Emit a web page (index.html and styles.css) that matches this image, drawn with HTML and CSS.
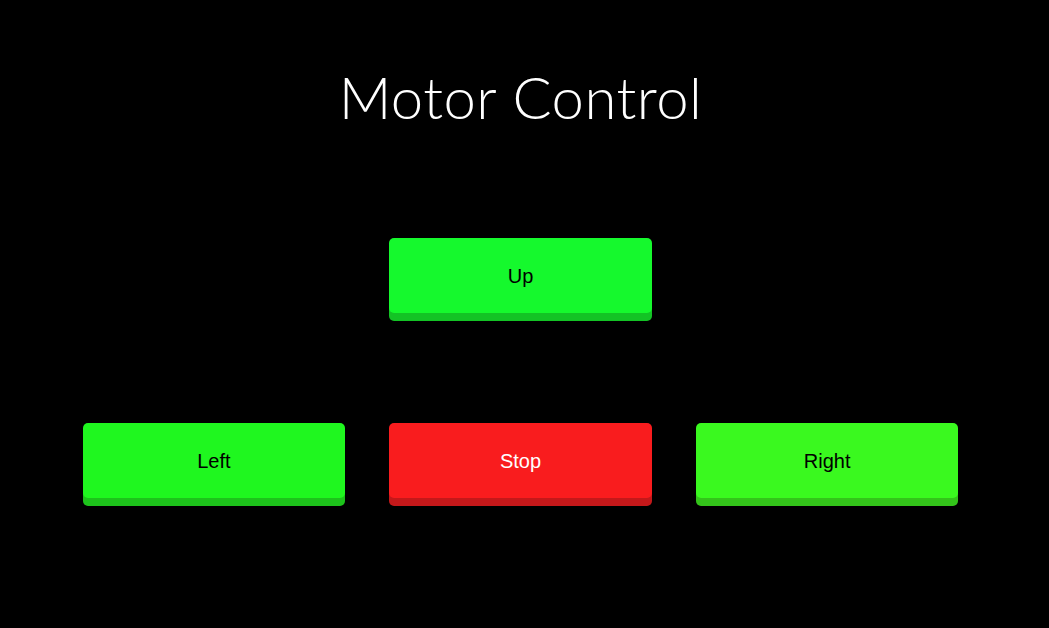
FILE: index.html
```html
<!DOCTYPE html>
<html>
<head>
<meta charset="utf-8">
<link rel="stylesheet" href="styles.css">
</head>
<body>
<div class="page">
  <h1 class="title">Motor Control</h1>
  <div class="pad">
    <div class="row row-top">
      <button class="btn btn-up">Up</button>
    </div>
    <div class="row row-bottom">
      <button class="btn btn-left">Left</button>
      <button class="btn btn-stop">Stop</button>
      <button class="btn btn-right">Right</button>
    </div>
  </div>
</div>
</body>
</html>
```
FILE: styles.css
```css
html, body {
  margin: 0;
  padding: 0;
  background: #000;
}
.page {
  width: 1041px;
  height: 628px;
  display: flex;
  flex-direction: column;
  align-items: center;
}
.title {
  margin: 62px 0 0;
  font-family: "Lato", "Noto Sans", sans-serif;
  font-weight: 300;
  font-size: 58px;
  letter-spacing: 0.5px;
  line-height: 70px;
  color: #fff;
}
.pad {
  width: 876px;
  display: flex;
  flex-direction: column;
  margin-top: 106px;
}
.row {
  display: grid;
  grid-template-columns: repeat(3, 1fr);
  column-gap: 44px;
}
.row-top .btn-up {
  grid-column: 2;
}
.row-bottom {
  margin-top: 110px;
}
.btn {
  height: 75px;
  border: none;
  border-radius: 5px;
  font-family: "Liberation Sans", Arial, sans-serif;
  font-size: 20px;
  color: #000;
  padding: 1px 0 0;
  cursor: pointer;
}
.btn-up {
  background: #15f92d;
  box-shadow: 0 8px 0 #13c325;
}
.btn-left {
  background: #1ff71f;
  box-shadow: 0 8px 0 #1dc31b;
}
.btn-stop {
  background: #f91c1e;
  box-shadow: 0 8px 0 #c4181a;
  color: #fff;
}
.btn-right {
  background: #3af91f;
  box-shadow: 0 8px 0 #33c41a;
}
```
